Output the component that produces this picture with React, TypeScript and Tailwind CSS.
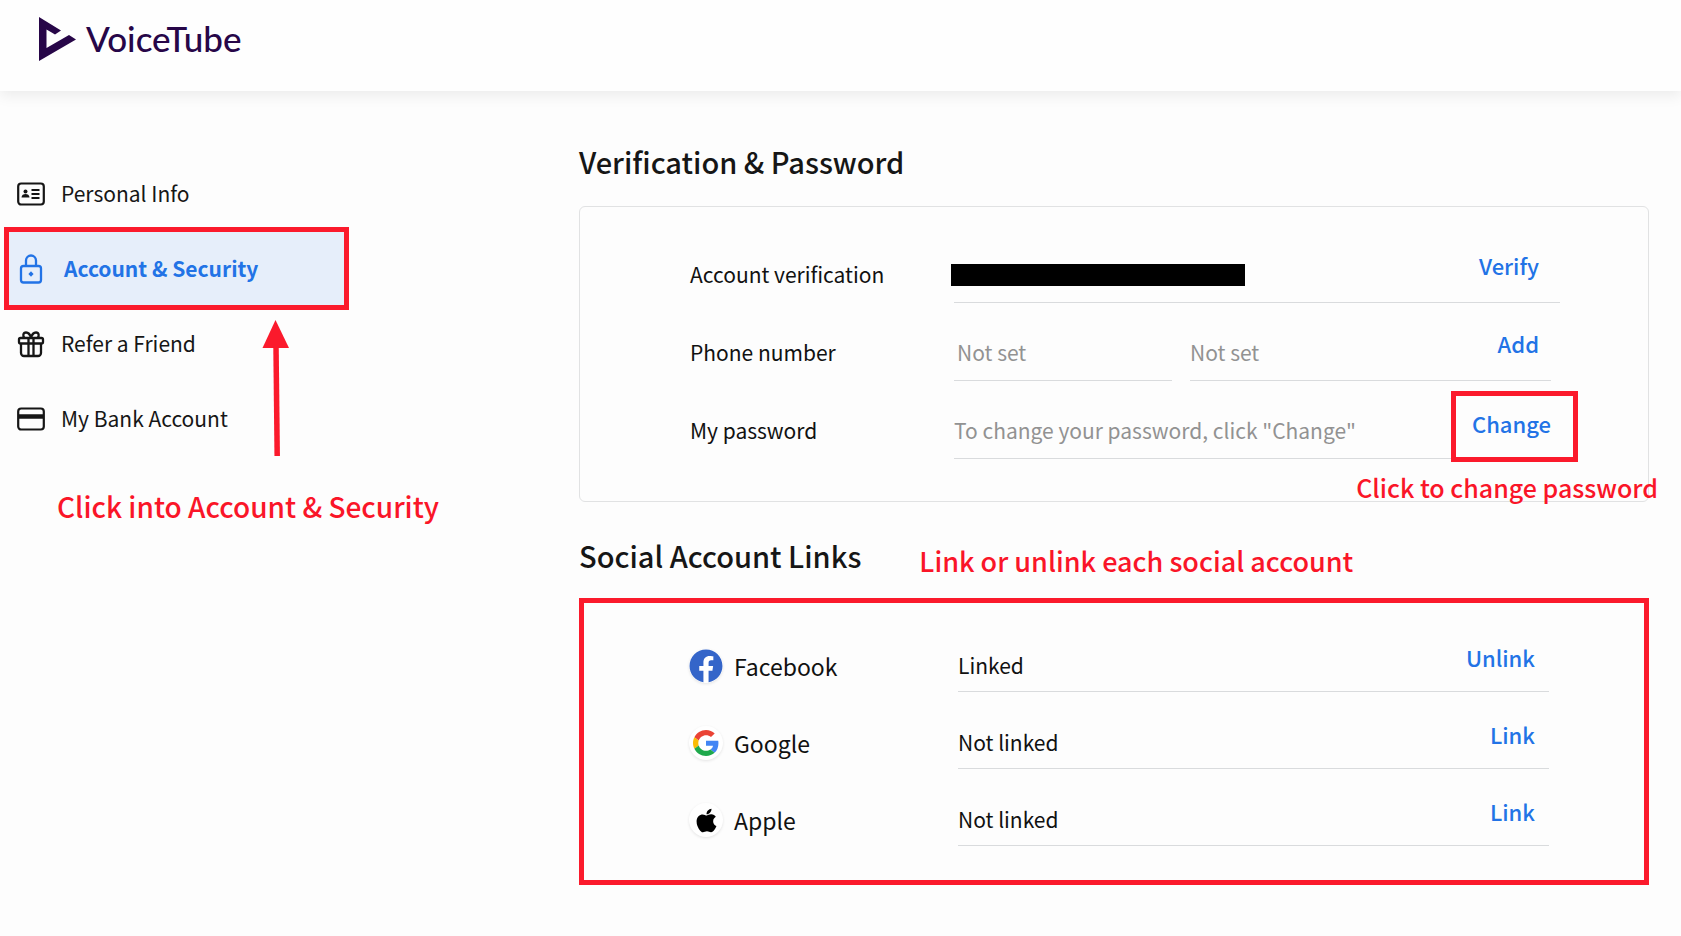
import type { ReactNode } from "react";
import { FaApple, FaFacebook } from "react-icons/fa";

const SANS = "font-['Noto_Sans_CJK_SC','Noto_Sans',sans-serif]";

function Logo() {
  return (
    <a href="#" aria-label="VoiceTube" className="flex items-center gap-[10px] text-[#270648]">
      <svg width="37" height="44" viewBox="0 0 37 44" fill="currentColor" aria-hidden="true">
        <path d="M0 0 L22 13.5 L16 17.5 L13.5 16 L7.5 12.5 V31 L30 18 L37 22.5 L0 44 Z" />
      </svg>
      <span className="pb-[2px] font-['Lato',sans-serif] text-[35px] leading-10 font-medium">VoiceTube</span>
    </a>
  );
}

function IdCardIcon() {
  return (
    <svg width="28" height="24" viewBox="0 0 28 24" fill="none" stroke="currentColor" strokeWidth="2.2" aria-hidden="true">
      <rect x="1.2" y="1.5" width="25.6" height="21" rx="3" />
      <circle cx="8.5" cy="9.5" r="2" fill="currentColor" stroke="none" />
      <path d="M4.5 15.5 c0-2.5 2-3.5 4-3.5 s4 1 4 3.5 z" fill="currentColor" stroke="none" />
      <path d="M14.5 8 h8 M14.5 12 h8 M14.5 16 h8" strokeWidth="1.8" />
    </svg>
  );
}

function LockIcon() {
  return (
    <svg width="28" height="30" viewBox="0 0 28 30" fill="none" stroke="currentColor" strokeWidth="2.3" aria-hidden="true">
      <rect x="4" y="12" width="20" height="16.5" rx="2.5" />
      <path d="M9 12 V6.5 a5 5 0 0 1 10 0 V12" />
      <path d="M14 17.3 L16.6 20 L14 22.7 L11.4 20 Z" fill="currentColor" stroke="none" />
    </svg>
  );
}

function GiftIcon() {
  return (
    <svg width="28" height="28" viewBox="0 0 28 28" fill="none" stroke="currentColor" strokeWidth="2.3" aria-hidden="true">
      <rect x="2" y="8" width="24" height="5.5" rx="1.5" />
      <path d="M4 13.5 V23 a3 3 0 0 0 3 3 H21 a3 3 0 0 0 3-3 V13.5" />
      <path d="M11.5 8 V26 M16.5 8 V26" />
      <path d="M14 8 C13 4 11 2.5 9 2.5 C6 2.5 5.500 6 7.500 8 M14 8 C15 4 17 2.5 19 2.5 C22 2.5 22.500 6 20.500 8" />
    </svg>
  );
}

function BankCardIcon() {
  return (
    <svg width="28" height="24" viewBox="0 0 28 24" fill="none" stroke="currentColor" strokeWidth="2.2" aria-hidden="true">
      <rect x="1.2" y="1.5" width="25.6" height="21" rx="3" />
      <path d="M1 9.500 H27" strokeWidth="4.500" />
    </svg>
  );
}

function GoogleIcon() {
  return (
    <svg width="26" height="26" viewBox="0 0 48 48" aria-hidden="true">
      <path fill="#ea4335" d="M24 9.500c3.540 0 6.710 1.220 9.210 3.600l6.850-6.850C35.900 2.380 30.470 0 24 0 14.620 0 6.510 5.380 2.560 13.220l7.980 6.190C12.430 13.720 17.740 9.500 24 9.500z" />
      <path fill="#4285f4" d="M46.980 24.550c0-1.570-.15-3.090-.38-4.550H24v9.020h12.940c-.58 2.960-2.260 5.480-4.780 7.180l7.730 6c4.510-4.180 7.090-10.360 7.090-17.650z" />
      <path fill="#fbbc05" d="M10.530 28.590c-.48-1.450-.76-2.990-.76-4.590s.27-3.140.76-4.590l-7.980-6.190C.92 16.460 0 20.120 0 24c0 3.880.92 7.540 2.560 10.780l7.970-6.190z" />
      <path fill="#1fa94c" d="M24 48c6.480 0 11.930-2.130 15.890-5.810l-7.730-6c-2.150 1.450-4.920 2.300-8.160 2.300-6.260 0-11.570-4.220-13.470-9.910l-7.980 6.190C6.510 42.620 14.620 48 24 48z" />
    </svg>
  );
}

function RoundBadge({ children }: { children: ReactNode }) {
  return (
    <span className="flex size-[34px] items-center justify-center rounded-full bg-white shadow-[0_1px_3px_rgba(0,0,0,0.1)]">
      {children}
    </span>
  );
}

type NavItem = { label: string; icon: ReactNode; active?: boolean };

const navItems: NavItem[] = [
  { label: "Personal Info", icon: <IdCardIcon /> },
  { label: "Account & Security", icon: <LockIcon />, active: true },
  { label: "Refer a Friend", icon: <GiftIcon /> },
  { label: "My Bank Account", icon: <BankCardIcon /> },
];

function Sidebar() {
  return (
    <aside className="relative w-[579px] shrink-0 pt-[65px]">
      <nav>
        {navItems.map((item) =>
          item.active ? (
            <a
              key={item.label}
              href="#"
              aria-current="page"
              className="-my-1 ml-1 flex h-[83px] w-[345px] items-center gap-[19px] border-5 border-[#fb1a2c] bg-[#e6eefa] pl-2 text-[21px] font-bold text-[#2273e6]"
            >
              {item.icon}
              {item.label}
            </a>
          ) : (
            <a key={item.label} href="#" className="flex h-[75px] items-center gap-4 pl-[17px] text-[21px] text-[#161616]">
              {item.icon}
              {item.label}
            </a>
          ),
        )}
      </nav>
      <p className="mt-[26px] pl-[57px] text-[28px] leading-[48px] font-medium text-[#fa1528]">Click into Account &amp; Security</p>
      <svg className="absolute top-[229px] left-[262px]" width="28" height="138" viewBox="0 0 28 138" aria-hidden="true">
        <path d="M13.500 0 L27 28 H0.500 Z" fill="#fb1a2c" />
        <path d="M14 26 L15.200 136" stroke="#fb1a2c" strokeWidth="5.500" />
      </svg>
    </aside>
  );
}

const fieldRow = "flex h-[78px] items-end text-[21px] leading-8 text-[#111111]";
const labelCell = "w-[264px] shrink-0 pb-[13px]";
const line = "border-b border-[#d9dbdd]";
const action = "text-[22px] leading-8 font-medium text-[#2273e6]";
const placeholder = "min-w-0 bg-transparent pb-3 outline-none placeholder:text-[#929292] placeholder:opacity-100";

function VerificationCard() {
  return (
    <section className="mt-[14px]">
      <h2 className="text-[29px] leading-[52px] font-medium text-[#161616]">Verification &amp; Password</h2>
      <div className="mt-[19px] rounded-md border border-[#e1e2e3] pt-[18px] pb-[42px] pl-[110px]">
        <div className={`${fieldRow} pr-[88px]`}>
          <span className={labelCell}>Account verification</span>
          <div className={`flex flex-1 items-end justify-between pr-[21px] ${line}`}>
            <span className="mb-4 -ml-[3px] h-[22px] w-[294px] bg-black" />
            <button type="button" className={`pb-[21px] ${action}`}>Verify</button>
          </div>
        </div>
        <div className={`${fieldRow} pr-[97px]`}>
          <label htmlFor="country-code" className={labelCell}>Phone number</label>
          <input id="country-code" readOnly placeholder="Not set" className={`w-[218px] pl-[3px] ${placeholder} ${line}`} />
          <div className={`ml-[18px] flex flex-1 items-end pr-3 ${line}`}>
            <input aria-label="Phone number" readOnly placeholder="Not set" className={`flex-1 ${placeholder}`} />
            <button type="button" className={`pb-[21px] ${action}`}>Add</button>
          </div>
        </div>
        <div className={`${fieldRow} pr-[97px]`}>
          <label htmlFor="password" className={labelCell}>My password</label>
          <div className={`flex flex-1 items-end ${line}`}>
            <input id="password" readOnly placeholder={'To change your password, click "Change"'} className={`flex-1 ${placeholder}`} />
            <div className="relative pb-[18px]">
              <span className="absolute -top-4 -right-[27px] -bottom-1 -left-[21px] border-5 border-[#fb1a2c] bg-[#fdfdfd]" />
              <button type="button" className={`relative ${action}`}>Change</button>
              <p className="absolute top-[60px] -right-[107px] text-[25px] leading-10 font-medium whitespace-nowrap text-[#fa1528]">
                Click to change password
              </p>
            </div>
          </div>
        </div>
      </div>
    </section>
  );
}

type Account = { name: string; icon: ReactNode; status: string; action: string };

const accounts: Account[] = [
  { name: "Facebook", icon: <FaFacebook size={34} color="#3465c9" />, status: "Linked", action: "Unlink" },
  { name: "Google", icon: <GoogleIcon />, status: "Not linked", action: "Link" },
  { name: "Apple", icon: <FaApple size={27} color="#000000" />, status: "Not linked", action: "Link" },
];

function SocialLinks() {
  return (
    <section className="mt-[27px]">
      <div className="flex items-start gap-[58px]">
        <h2 className="text-[29px] leading-[52px] font-medium text-[#161616]">Social Account Links</h2>
        <p className="pt-[6px] text-[27px] leading-[52px] font-medium text-[#fa1528]">Link or unlink each social account</p>
      </div>
      <ul className="mt-[11px] border-5 border-[#fb1a2c] pt-3 pr-[95px] pb-[34px] pl-[105px]">
        {accounts.map((a) => (
          <li key={a.name} className="flex h-[77px] items-end text-[21px] leading-8 text-[#111111]">
            <span className="flex w-[269px] shrink-0 items-center gap-[11px] pb-[9px] text-[23px]">
              <RoundBadge>{a.icon}</RoundBadge>
              {a.name}
            </span>
            <span className={`flex flex-1 items-end justify-between pr-[14px] ${line}`}>
              <span className="pb-[10px]">{a.status}</span>
              <button type="button" className={`pb-[18px] ${action}`}>{a.action}</button>
            </span>
          </li>
        ))}
      </ul>
    </section>
  );
}

export default function App() {
  return (
    <div className={`min-h-screen bg-[#fdfdfd] ${SANS}`}>
      <header className="relative flex h-[91px] items-center bg-[#fefefe] pb-[13px] pl-[39px] shadow-[0_4px_14px_rgba(0,0,0,0.08)]">
        <Logo />
      </header>
      <div className="flex">
        <Sidebar />
        <main className="min-w-0 flex-1 pt-[30px] pr-8">
          <VerificationCard />
          <SocialLinks />
        </main>
      </div>
    </div>
  );
}
